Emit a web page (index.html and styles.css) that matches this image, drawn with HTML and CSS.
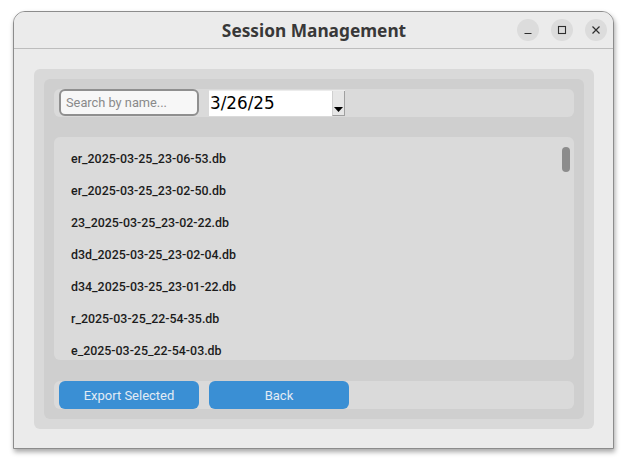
FILE: index.html
```html
<!DOCTYPE html>
<html>
<head>
<meta charset="utf-8">
<link rel="stylesheet" href="styles.css">
</head>
<body>
<div class="window">
  <div class="titlebar">
    <div class="title">Session Management</div>
    <div class="controls">
      <span class="ctl"><svg width="10" height="10" viewBox="0 0 10 10"><path d="M1.5 8.5h7" stroke="#2e2e2e" stroke-width="1.2"/></svg></span>
      <span class="ctl"><svg width="10" height="10" viewBox="0 0 10 10"><rect x="1.5" y="1.5" width="7" height="7" fill="none" stroke="#2e2e2e" stroke-width="1.1"/></svg></span>
      <span class="ctl"><svg width="10" height="10" viewBox="0 0 10 10"><path d="M1.5 1.5l7 7M8.5 1.5l-7 7" stroke="#2e2e2e" stroke-width="1.2"/></svg></span>
    </div>
  </div>
  <div class="content">
    <div class="outer">
      <div class="inner">
        <div class="row toprow">
          <div class="search">Search by name...</div>
          <div class="date">
            <span class="date-text">3/26/25</span>
            <span class="drop"><svg width="9" height="5" viewBox="0 0 9 5"><path d="M0 0h9L4.5 5z" fill="#000"/></svg></span>
          </div>
        </div>
        <div class="list">
          <div class="items">
            <div class="item">er_2025-03-25_23-06-53.db</div>
            <div class="item">er_2025-03-25_23-02-50.db</div>
            <div class="item">23_2025-03-25_23-02-22.db</div>
            <div class="item">d3d_2025-03-25_23-02-04.db</div>
            <div class="item">d34_2025-03-25_23-01-22.db</div>
            <div class="item">r_2025-03-25_22-54-35.db</div>
            <div class="item">e_2025-03-25_22-54-03.db</div>
          </div>
          <div class="scrollbar"></div>
        </div>
        <div class="row bottomrow">
          <div class="btn">Export Selected</div>
          <div class="btn">Back</div>
        </div>
      </div>
    </div>
  </div>
</div>
</body>
</html>
```
FILE: styles.css
```css
html, body {
  margin: 0;
  padding: 0;
  background: #ffffff;
  width: 628px;
  height: 466px;
  overflow: hidden;
}
body {
  padding: 11px 14px 0 13px;
  box-sizing: border-box;
}
.window {
  width: 601px;
  height: 438px;
  box-sizing: border-box;
  border: 1px solid #8c8c8c;
  border-radius: 12px 12px 0 0;
  background: #ebebeb;
  box-shadow: 1px 3px 5px rgba(0,0,0,0.35);
  overflow: hidden;
  display: flex;
  flex-direction: column;
}
.titlebar {
  height: 36px;
  flex: none;
  border-bottom: 1px solid #bdbdbd;
  background: #ebebeb;
  position: relative;
  display: flex;
  align-items: center;
  justify-content: center;
}
.title {
  font-family: "Noto Sans", "DejaVu Sans", sans-serif;
  font-weight: 700;
  font-size: 17.3px;
  color: #383838;
  margin-left: 1px;
  margin-top: 0px;
}
.controls {
  position: absolute;
  right: 6px;
  top: 7px;
  display: flex;
  gap: 12px;
}
.ctl {
  width: 22px;
  height: 22px;
  border-radius: 50%;
  background: #dcdcdc;
  display: flex;
  align-items: center;
  justify-content: center;
}
.content {
  flex: 1;
  padding: 20px 19px 19px 20px;
}
.outer {
  background: #d9d9d9;
  border-radius: 6px;
  padding: 10px;
  height: 360px;
  box-sizing: border-box;
}
.inner {
  background: #cfcfcf;
  border-radius: 6px;
  padding: 10px;
  height: 340px;
  box-sizing: border-box;
  display: flex;
  flex-direction: column;
}
.row {
  background: #dadada;
  border-radius: 6px;
  height: 28px;
  display: flex;
  align-items: center;
  padding-left: 5px;
  gap: 10px;
  flex: none;
}
.search {
  width: 140px;
  height: 27px;
  box-sizing: border-box;
  border: 2px solid #8f8f8f;
  border-radius: 6px;
  background: #f7f7f7;
  font-family: Roboto, "Liberation Sans", sans-serif;
  font-size: 12.8px;
  color: #8a8a8a;
  padding-left: 5px;
  display: flex;
  align-items: center;
  align-self: flex-start;
}
.date {
  width: 136px;
  height: 26px;
  background: #ffffff;
  display: flex;
  box-sizing: border-box;
  align-self: flex-start;
  margin-top: 1px;
  border-top: 1px solid #ececec;
}
.date-text {
  flex: 1;
  font-family: "DejaVu Sans", sans-serif;
  font-size: 16.8px;
  color: #000;
  padding-left: 1px;
  line-height: 24px;
}
.drop {
  width: 13px;
  background: #e6e6e6;
  border-left: 1px solid #d0d0d0;
  border-right: 1px solid #a0a0a0;
  border-bottom: 1px solid #a0a0a0;
  display: flex;
  align-items: flex-end;
  justify-content: center;
  padding-bottom: 3px;
  box-sizing: border-box;
}
.list {
  margin-top: 20px;
  height: 223px;
  background: #dadada;
  border-radius: 6px;
  flex: none;
  position: relative;
  overflow: hidden;
}
.items {
  padding-top: 6px;
  height: 219px;
  box-sizing: border-box;
  overflow: hidden;
}
.item {
  height: 32px;
  line-height: 32px;
  padding-left: 17px;
  font-family: Roboto, "Liberation Sans", sans-serif;
  font-weight: 500;
  font-size: 12.4px;
  color: #1c1c1c;
}
.scrollbar {
  position: absolute;
  right: 4px;
  top: 10px;
  width: 8px;
  height: 25px;
  border-radius: 4px;
  background: #8c8c8c;
}
.bottomrow {
  margin-top: 21px;
}
.btn {
  width: 140px;
  height: 28px;
  border-radius: 6px;
  background: #3a8fd4;
  color: #e2ebf4;
  font-family: Roboto, "Liberation Sans", sans-serif;
  font-size: 13px;
  display: flex;
  align-items: center;
  justify-content: center;
}
```
